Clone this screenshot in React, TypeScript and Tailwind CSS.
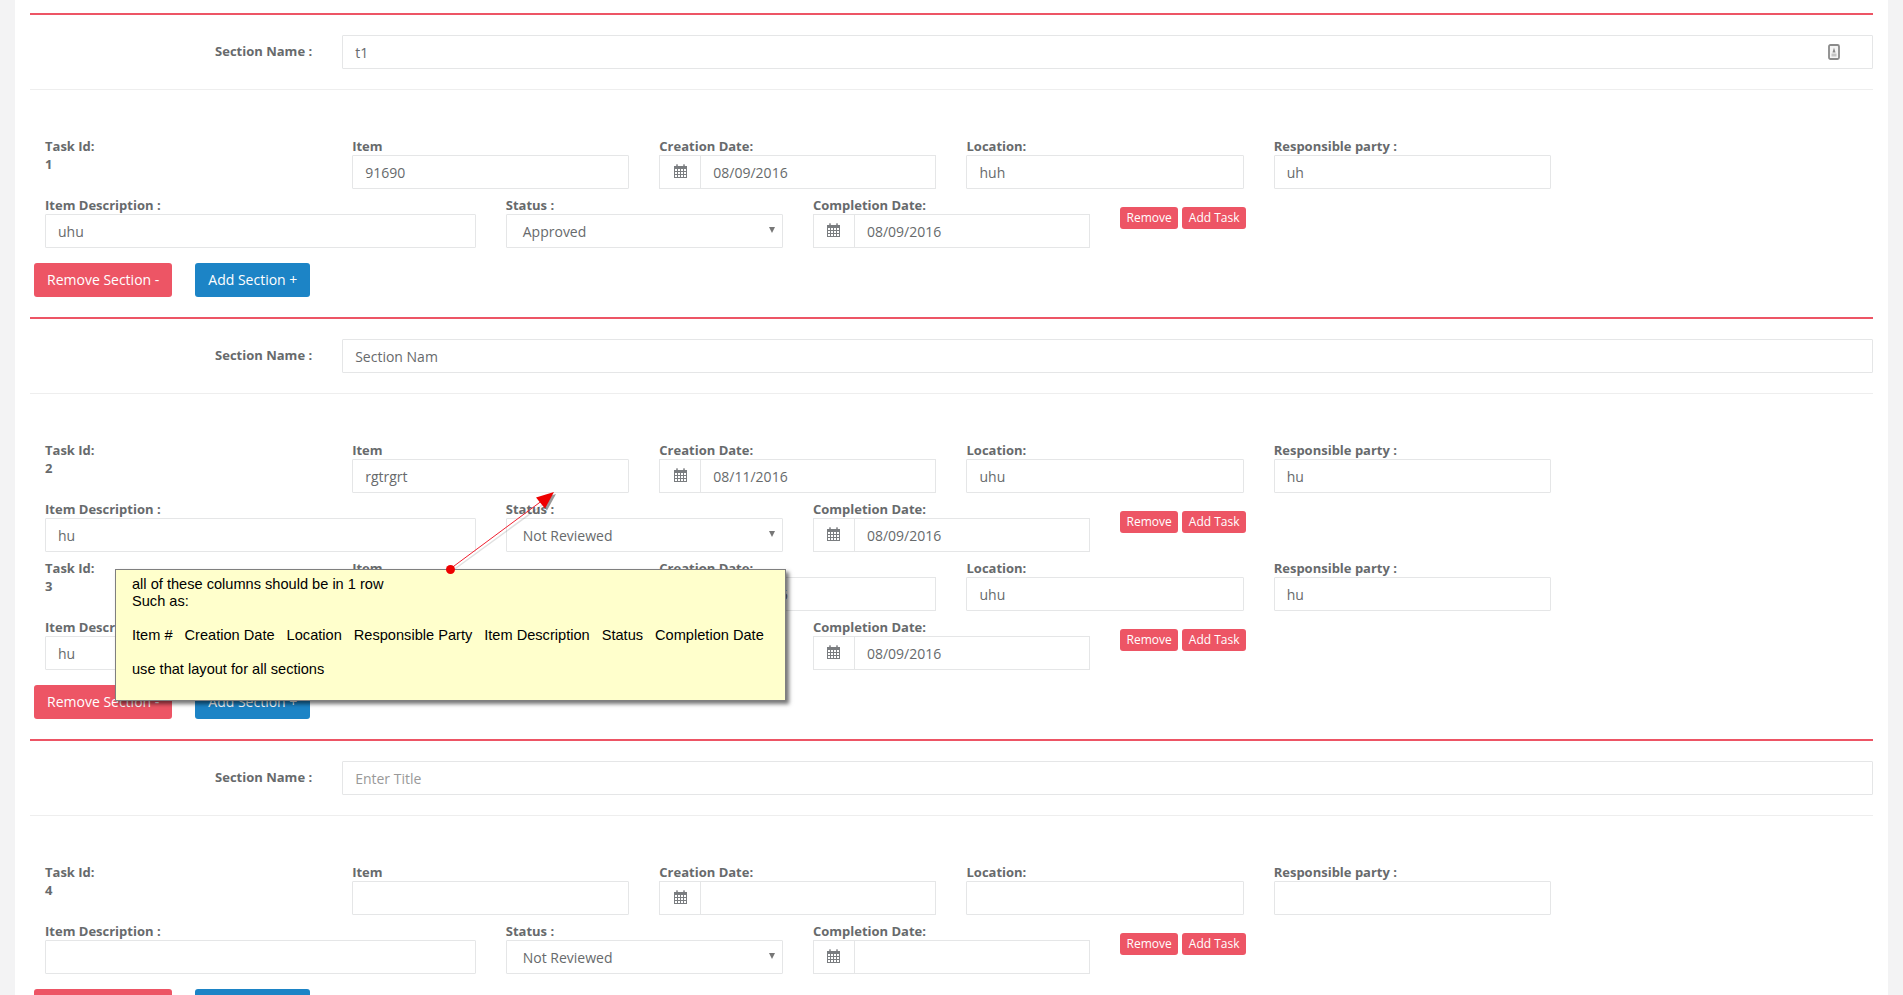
const label = "block text-[13px] leading-[18px] font-bold text-[#676a6c]";
const input =
  "flex items-center h-[34px] w-full border border-[#e5e6e7] rounded-[1px] bg-white px-3 text-[14px] text-[#676a6c]";
const smallBtn =
  "mt-[1px] h-[22px] rounded-[3px] bg-[#ed5565] px-[6.5px] text-[12px] leading-[22px] text-white";

type Task = {
  id: number;
  item: string;
  created: string;
  location: string;
  party: string;
  description: string;
  status: string;
  completed: string;
};

type Section = { name: string; placeholder?: boolean; icon?: boolean; tasks: Task[] };

const sections: Section[] = [
  {
    name: "t1",
    icon: true,
    tasks: [
      {
        id: 1,
        item: "91690",
        created: "08/09/2016",
        location: "huh",
        party: "uh",
        description: "uhu",
        status: "Approved",
        completed: "08/09/2016",
      },
    ],
  },
  {
    name: "Section Nam",
    tasks: [
      {
        id: 2,
        item: "rgtrgrt",
        created: "08/11/2016",
        location: "uhu",
        party: "hu",
        description: "hu",
        status: "Not Reviewed",
        completed: "08/09/2016",
      },
      {
        id: 3,
        item: "",
        created: "08/09/2016",
        location: "uhu",
        party: "hu",
        description: "hu",
        status: "Not Reviewed",
        completed: "08/09/2016",
      },
    ],
  },
  {
    name: "Enter Title",
    placeholder: true,
    tasks: [
      {
        id: 4,
        item: "",
        created: "",
        location: "",
        party: "",
        description: "",
        status: "Not Reviewed",
        completed: "",
      },
    ],
  },
];

function CalendarIcon() {
  return (
    <svg className="mb-[3px]" width="13" height="14" viewBox="0 0 13 14" fill="#7a7d80">
      <path d="M0 2h2.5V1h1v1h6V1h1v1H13v12H0V2zm1 3v2h2V5H1zm3 0v2h2V5H4zm3 0v2h2V5H7zm3 0v2h2V5h-2zM1 8v2h2V8H1zm3 0v2h2V8H4zm3 0v2h2V8H7zm3 0v2h2V8h-2zM1 11v2h2v-2H1zm3 0v2h2v-2H4zm3 0v2h2v-2H7zm3 0v2h2v-2h-2z" />
      <rect x="2.5" y="0" width="1" height="3" />
      <rect x="9.5" y="0" width="1" height="3" />
    </svg>
  );
}

function DateField({ value }: { value: string }) {
  return (
    <div className="flex h-[34px] w-full border border-[#e5e6e7] bg-white text-[14px] text-[#676a6c]">
      <div className="flex w-[41px] shrink-0 items-center justify-center border-r border-[#e5e6e7]">
        <CalendarIcon />
      </div>
      <div className="flex items-center px-3">{value}</div>
    </div>
  );
}

function Field({ title, children }: { title: string; children: React.ReactNode }) {
  return (
    <div>
      <label className={label}>{title}</label>
      {children}
    </div>
  );
}

function TaskRows({ task }: { task: Task }) {
  return (
    <div>
      <div className="grid grid-cols-12 pb-[7px]">
        <div className="col-span-2 px-[15px]">
          <div className={label}>Task Id:</div>
          <div className={label}>{task.id}</div>
        </div>
        <div className="col-span-2 px-[15px]">
          <Field title="Item">
            <div className={input}>{task.item}</div>
          </Field>
        </div>
        <div className="col-span-2 px-[15px]">
          <Field title="Creation Date:">
            <DateField value={task.created} />
          </Field>
        </div>
        <div className="col-span-2 px-[15px]">
          <Field title="Location:">
            <div className={input}>{task.location}</div>
          </Field>
        </div>
        <div className="col-span-2 px-[15px]">
          <Field title="Responsible party :">
            <div className={input}>{task.party}</div>
          </Field>
        </div>
      </div>
      <div className="grid grid-cols-12 pb-[7px]">
        <div className="col-span-3 px-[15px]">
          <Field title="Item Description :">
            <div className={input}>{task.description}</div>
          </Field>
        </div>
        <div className="col-span-2 px-[15px]">
          <Field title="Status :">
            <div className={`${input} relative pl-4`}>
              {task.status}
              <span className="absolute right-[7px] top-[12px] h-0 w-0 border-x-[3px] border-t-[6px] border-x-transparent border-t-[#777]" />
            </div>
          </Field>
        </div>
        <div className="col-span-2 px-[15px]">
          <Field title="Completion Date:">
            <DateField value={task.completed} />
          </Field>
        </div>
        <div className="col-span-2 flex items-start gap-1 px-[15px] pt-[10px]">
          <button className={smallBtn}>Remove</button>
          <button className={smallBtn}>Add Task</button>
        </div>
      </div>
    </div>
  );
}

function SectionBlock({ section }: { section: Section }) {
  return (
    <section className="border-t-2 border-[#ed5565] pt-5">
      <div className="-mx-[15px] grid grid-cols-12">
        <label className={`${label} col-span-2 px-[15px] pt-[7px] text-right`}>Section Name :</label>
        <div className="col-span-10 px-[15px]">
          <div className={`${input} justify-between`}>
            <span className={section.placeholder ? "text-[#999]" : ""}>{section.name}</span>
            {section.icon && (
              <svg className="mr-[20px]" width="12" height="16" viewBox="0 0 12 16">
                <rect x="1" y="1" width="10" height="14" rx="1.5" fill="#f4f4f4" stroke="#8a8a8a" strokeWidth="1.8" />
                <path d="M6 3.5 7.5 8.5h-3z" fill="#8a8a8a" />
                <rect x="3.5" y="9.5" width="5" height="3" fill="#c4c4c4" />
              </svg>
            )}
          </div>
        </div>
      </div>
      <hr className="mt-5 mb-[47px] border-t border-[#eeeeee]" />
      {section.tasks.map((task) => (
        <TaskRows key={task.id} task={task} />
      ))}
      <div className="flex gap-[23px] pl-1 pt-2 pb-5">
        <button className="h-[34px] rounded-[3px] bg-[#ed5565] px-[13px] pb-[2px] text-[14px] text-white">
          Remove Section -
        </button>
        <button className="h-[34px] rounded-[3px] bg-[#1c84c6] px-[13px] pb-[2px] text-[14px] text-white">
          Add Section +
        </button>
      </div>
    </section>
  );
}

function Annotation() {
  return (
    <>
      <svg className="absolute left-[440px] top-[480px]" width="130" height="100" viewBox="440 480 130 100">
        <line x1="452" y1="571" x2="545" y2="503" stroke="#000000" strokeOpacity="0.12" strokeWidth="1.5" />
        <line x1="450" y1="569" x2="543" y2="500" stroke="#f02030" strokeWidth="1" />
        <path d="M554 492 536 497.5 545 508.5z" fill="#555555" opacity="0.6" transform="translate(2 2)" />
        <path d="M554 492 536 497.5 545 508.5z" fill="#ee0000" />
      </svg>
      <div className="absolute left-[115px] top-[569px] h-[132px] w-[671px] border border-[#7f7f7f] bg-[#ffffcc] pl-4 pt-[6px] font-['Liberation_Sans',sans-serif] text-[14.6px] leading-[17px] text-black shadow-[3px_3px_4px_rgba(0,0,0,0.55)]">
        <div>all of these columns should be in 1 row</div>
        <div>Such as:</div>
        <div className="mt-[17px] flex gap-[12px]">
          <span>Item #</span>
          <span>Creation Date</span>
          <span>Location</span>
          <span>Responsible Party</span>
          <span>Item Description</span>
          <span>Status</span>
          <span>Completion Date</span>
        </div>
        <div className="mt-[17px]">use that layout for all sections</div>
      </div>
      <span className="absolute left-[446px] top-[565px] h-[9px] w-[9px] rounded-full bg-[#ee0000]" />
    </>
  );
}

export default function App() {
  return (
    <div className="relative h-[995px] overflow-hidden bg-[#f3f3f4] pl-[15px] pr-[15px] font-['Open_Sans',sans-serif]">
      <div className="bg-white px-[15px] pt-[13px]">
        {sections.map((section) => (
          <SectionBlock key={section.name} section={section} />
        ))}
      </div>
      <Annotation />
    </div>
  );
}
